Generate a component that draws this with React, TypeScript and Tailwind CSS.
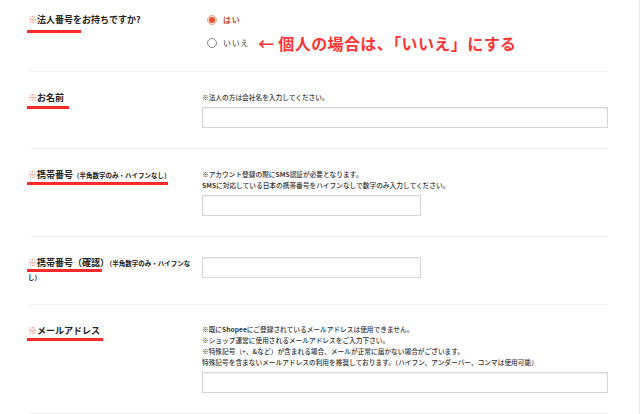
import type { ReactNode } from 'react'

const font = { fontFamily: '"Noto Sans CJK JP", "Noto Sans", sans-serif' }

function Mark() {
  return <span className="text-[#ec7a5c]">※</span>
}

function Bar({ top, width }: { top: string; width: string }) {
  // red marker line drawn over the label
  return <span className={`absolute left-[-1px] h-[3px] bg-[#fc2b2b] ${top} ${width}`} />
}

function TextInput({ wide }: { wide?: boolean }) {
  return (
    <input
      type="text"
      className={`block h-[21px] border border-[#d6d6d6] bg-white shadow-[inset_0_1px_2px_rgba(0,0,0,0.07)] outline-none ${wide ? 'w-[406px]' : 'w-[219px]'}`}
    />
  )
}

function Notes({ lines }: { lines: ReactNode[] }) {
  return (
    <div className="mb-[4px] text-[6.7px] font-medium leading-[11px] text-[#333]">
      {lines.map((l, i) => (
        <div key={i} className="whitespace-nowrap">{l}</div>
      ))}
    </div>
  )
}

function Row({ label, children, rightPt = 'pt-[20px]' }: { label: ReactNode; children: ReactNode; rightPt?: string }) {
  return (
    <>
      <div className="flex items-start pb-[20px]">
        <div className="w-[166px] pt-[19px] text-[9px] font-bold leading-[14px] text-[#222]">
          <div className="relative">{label}</div>
        </div>
        <div className={`ml-[8px] w-[406px] ${rightPt}`}>{children}</div>
      </div>
      <div className="ml-[2px] h-px w-[578px] bg-[#efefef]" />
    </>
  )
}

export default function App() {
  return (
    <div className="min-h-[414px] w-full border-r border-[#e6e6e6] bg-white" style={font}>
      <div className="pl-[28px]">
        {/* 法人番号 */}
        <div className="flex items-start pt-[13px] pb-[21px]">
          <div className="w-[166px] text-[9px] font-bold leading-[14px] text-[#222]">
            <div className="relative">
              <Mark />法人番号をお持ちですか?
              <Bar top="top-[17px]" width="w-[54px]" />
            </div>
          </div>
          <div className="ml-[13px]">
            <div className="flex h-[14px] items-center gap-[6px]">
              <span className="flex h-[10px] w-[10px] items-center justify-center rounded-full border border-[#f1a690] bg-[#fde3db]">
                <span className="h-[6px] w-[6px] rounded-full bg-[#e8532f]" />
              </span>
              <span className="text-[8px] font-bold tracking-[0.08em] text-[#c3532f]">はい</span>
            </div>
            <div className="mt-[9px] flex h-[14px] items-center">
              <span className="h-[10px] w-[10px] rounded-full border border-[#8a8a8a] bg-white" />
              <span className="ml-[6px] text-[8px] tracking-[0.08em] text-[#444]">いいえ</span>
              <span className="ml-[9px] whitespace-nowrap text-[16px] font-bold tracking-[0.4px] text-[#fc3535]">← 個人の場合は、「いいえ」にする</span>
            </div>
          </div>
        </div>
        <div className="ml-[2px] h-px w-[578px] bg-[#efefef]" />

        <Row
          label={
            <>
              <Mark />お名前
              <Bar top="top-[15px]" width="w-[42px]" />
            </>
          }
        >
          <Notes lines={['※法人の方は会社名を入力してください。']} />
          <TextInput wide />
        </Row>

        <Row
          label={
            <>
              <Mark />携帯番号<span className="text-[6.5px]">（半角数字のみ・ハイフンなし）</span>
              <Bar top="top-[14px]" width="w-[141px]" />
            </>
          }
        >
          <Notes
            lines={[
              <>※アカウント登録の際に<b>SMS</b>認証が必要となります。</>,
              <><b>SMS</b>に対応している日本の携帯番号をハイフンなしで数字のみ入力してください。</>,
            ]}
          />
          <TextInput />
        </Row>

        <Row
          label={
            <>
              <Mark />携帯番号（確認）<span className="text-[6.5px]">（半角数字のみ・ハイフンなし）</span>
              <Bar top="top-[13px]" width="w-[75px]" />
            </>
          }
        >
          <TextInput />
        </Row>

        <Row
          rightPt="pt-[19px]"
          label={
            <>
              <Mark />メールアドレス
              <Bar top="top-[14px]" width="w-[76px]" />
            </>
          }
        >
          <Notes
            lines={[
              <>※既に<b>Shopee</b>にご登録されているメールアドレスは使用できません。</>,
              '※ショップ運営に使用されるメールアドレスをご入力下さい。',
              '※特殊記号（+、&など）が含まれる場合、メールが正常に届かない場合がございます。',
              '特殊記号を含まないメールアドレスの利用を推奨しております。（ハイフン、アンダーバー、コンマは使用可能）',
            ]}
          />
          <TextInput wide />
        </Row>
      </div>
    </div>
  )
}
